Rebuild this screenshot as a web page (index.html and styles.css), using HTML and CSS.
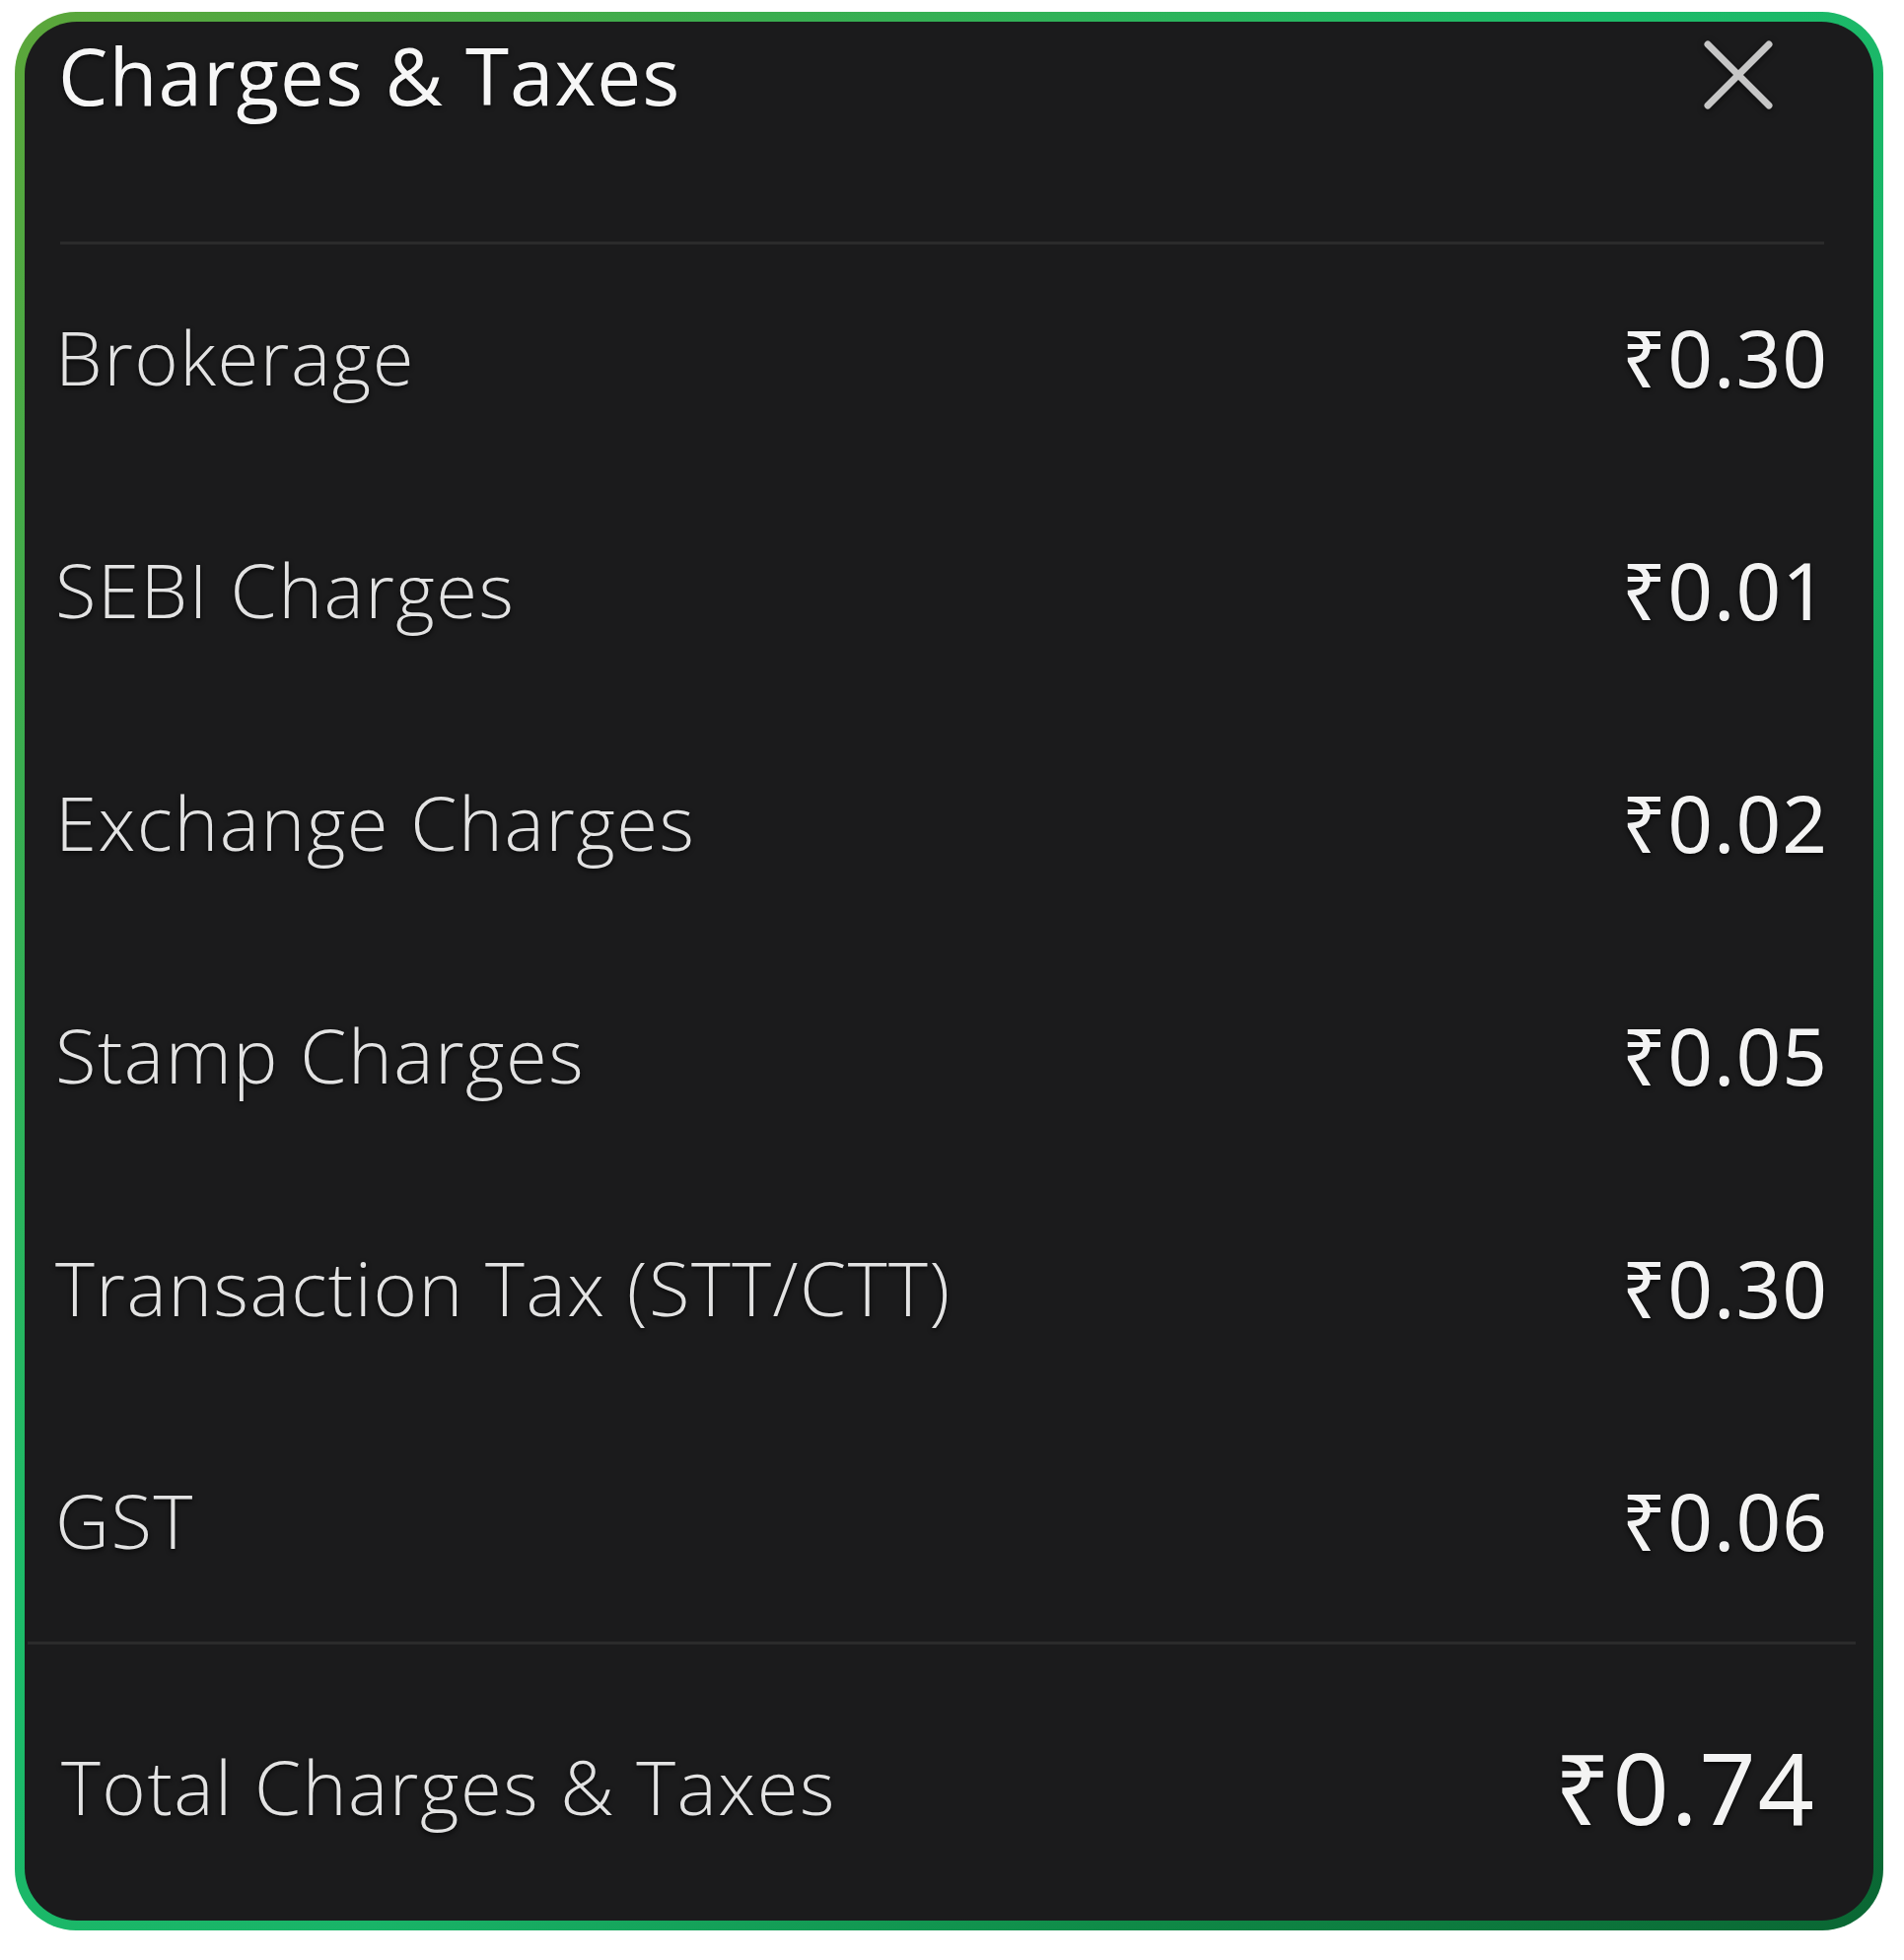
FILE: index.html
```html
<!DOCTYPE html>
<html lang="en">

<head>
    <meta charset="UTF-8">
    <title>Charges &amp; Taxes</title>
    <link rel="stylesheet" href="styles.css">
</head>

<body>
    <div class="card">
        <div class="sheet">
            <div class="header">
                <div class="title">Charges &amp; Taxes</div>
                <svg class="close" width="78" height="78" viewBox="0 0 78 78">
                    <path d="M8 8 L70 70 M70 8 L8 70" stroke="#c6c6c6" stroke-width="7" stroke-linecap="round" fill="none" />
                </svg>
            </div>
            <div class="divider"></div>

            <div class="rows">
                <div class="row">
                    <span class="label">Brokerage</span>
                    <span class="value">₹0.30</span>
                </div>
                <div class="row">
                    <span class="label">SEBI Charges</span>
                    <span class="value">₹0.01</span>
                </div>
                <div class="row">
                    <span class="label">Exchange Charges</span>
                    <span class="value">₹0.02</span>
                </div>
                <div class="row">
                    <span class="label">Stamp Charges</span>
                    <span class="value">₹0.05</span>
                </div>
                <div class="row">
                    <span class="label">Transaction Tax (STT/CTT)</span>
                    <span class="value">₹0.30</span>
                </div>
                <div class="row">
                    <span class="label">GST</span>
                    <span class="value">₹0.06</span>
                </div>
            </div>

            <div class="divider wide"></div>

            <div class="total">
                <span class="label">Total Charges &amp; Taxes</span>
                <span class="value big">₹0.74</span>
            </div>
        </div>
    </div>
</body>

</html>
```

FILE: styles.css
```css
body {
    margin: 0;
    padding: 0;
    background: #fff;
    font-family: "Open Sans", "Noto Sans", sans-serif;
}

/* gradient frame */
.card {
    margin: 12px 0 0 15px;
    width: 1895px;
    height: 1946px;
    padding: 10px;
    box-sizing: border-box;
    border-radius: 62px;
    background: linear-gradient(135deg, #5ca63a 0%, #3aad4f 20%, #1dbb69 42%, #19b468 60%, #0f8a47 80%, #0a6633 100%);
}

.sheet {
    height: 100%;
    background: #1b1b1c;
    border-radius: 53px;
    display: flex;
    flex-direction: column;
}

.header {
    height: 223px;
    box-sizing: border-box;
    padding: 15px 98px 0 34px;
    display: flex;
    justify-content: space-between;
    align-items: flex-start;
}

.title {
    margin-top: -1px;
    font-size: 80px;
    line-height: 80px;
    font-weight: 500;
    letter-spacing: 1px;
    color: #f6f6f6;
    text-shadow: 0 2px 5px rgba(0, 0, 0, 0.7);
}

.close {
    display: block;
    filter: drop-shadow(0 2px 3px rgba(0, 0, 0, 0.6));
}

.divider {
    height: 3px;
    background: #2b2b2b;
    margin: 0 50px 0 36px;
}

.divider.wide {
    margin: 1px 18px 0 3px;
}

.row {
    height: 236px;
    box-sizing: border-box;
    padding: 0 46px 8px 31px;
    display: flex;
    justify-content: space-between;
    align-items: center;
}

.label {
    font-size: 76px;
    line-height: 76px;
    font-weight: 350;
    letter-spacing: 1.5px;
    color: #e2e2e2;
    text-shadow: 0 2px 5px rgba(0, 0, 0, 0.8);
}

.value {
    font-family: "Noto Sans", "Open Sans", sans-serif;
    font-size: 80px;
    line-height: 76px;
    font-weight: 400;
    letter-spacing: 1px;
    color: #f3f3f3;
    text-shadow: 0 2px 5px rgba(0, 0, 0, 0.8);
}

.total {
    flex: 1;
    display: flex;
    justify-content: space-between;
    align-items: center;
    padding: 8px 58px 0 37px;
}

.value.big {
    font-size: 100px;
    line-height: 100px;
    letter-spacing: 2px;
}
```
